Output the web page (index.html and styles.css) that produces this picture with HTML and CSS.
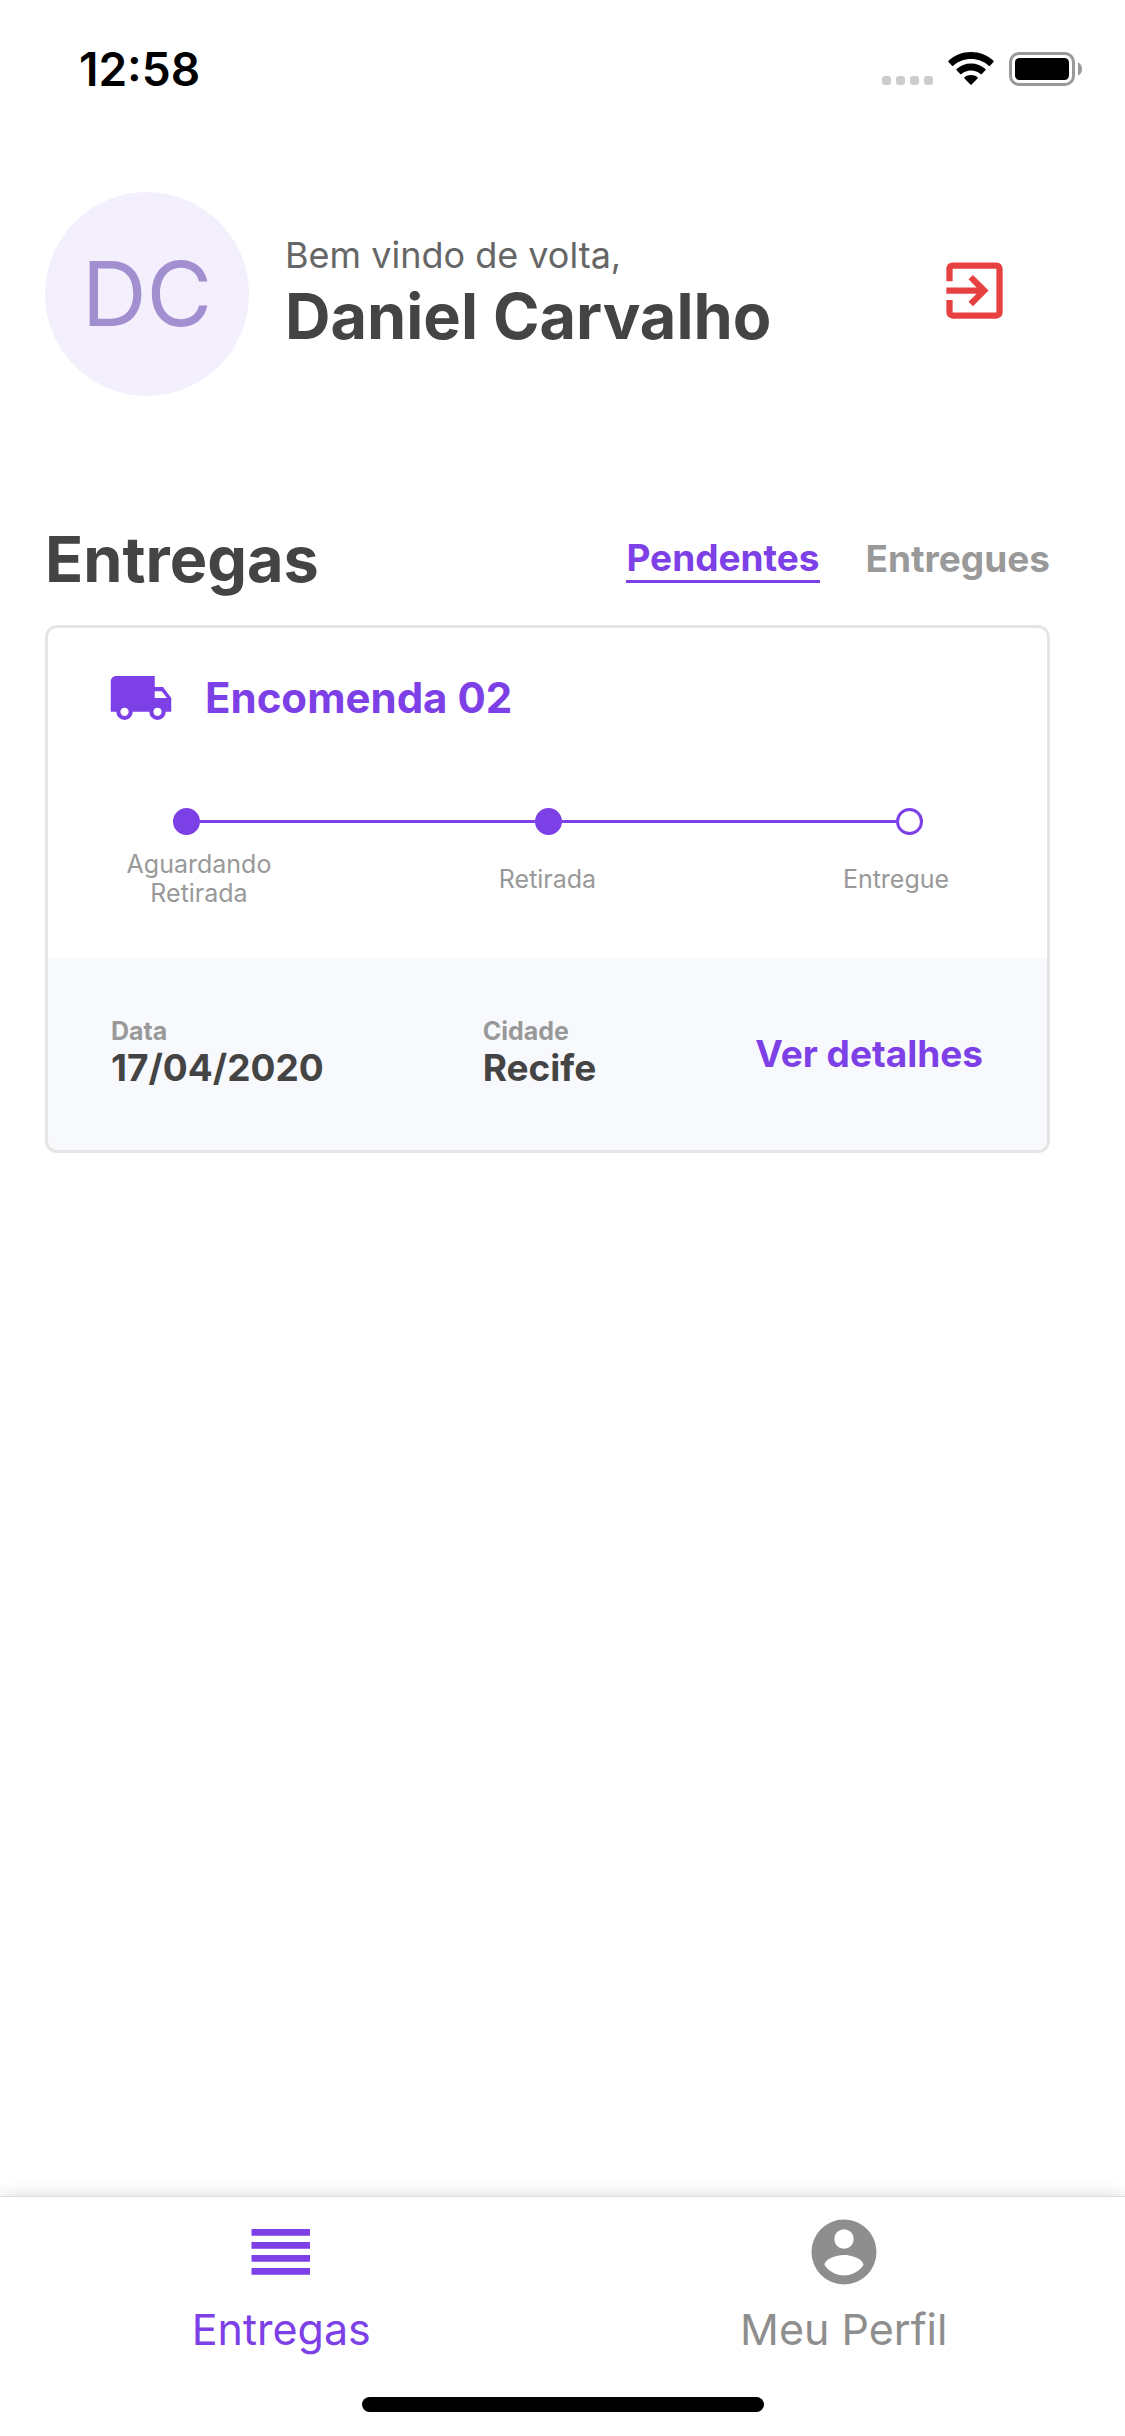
FILE: index.html
```html
<!DOCTYPE html>
<html lang="pt-BR">
<head>
<meta charset="utf-8">
<meta name="viewport" content="width=device-width, initial-scale=1">
<title>Entregas</title>
<link rel="stylesheet" href="styles.css">
</head>
<body>
<div class="status-bar">
  <time class="status-time">12:58</time>
  <div class="status-icons">
    <svg width="51" height="34" viewBox="0 0 51 34" fill="#cccccc" aria-hidden="true">
      <rect x="0" y="24" width="9" height="9" rx="3"/>
      <rect x="14" y="24" width="9" height="9" rx="3"/>
      <rect x="28" y="24" width="9" height="9" rx="3"/>
      <rect x="42" y="24" width="9" height="9" rx="3"/>
    </svg>
    <svg width="46" height="34" viewBox="0 0 46 34" aria-hidden="true">
      <path d="M23 0C14.400 0 6.600 3.300.500 8.800Q0 9.400.500 10L4 13.700Q4.600 14.200 5.200 13.700C10 9.400 16.200 7 23 7S36 9.400 40.800 13.700Q41.400 14.200 42 13.700L45.500 10Q46 9.400 45.500 8.800C39.400 3.300 31.600 0 23 0Z"/>
      <path d="M23 11.500C17.500 11.500 12.400 13.500 8.600 17Q8 17.600 8.600 18.200L12.200 21.900Q12.800 22.400 13.400 21.900C16 19.700 19.300 18.400 23 18.400S30 19.700 32.600 21.900Q33.200 22.400 33.800 21.900L37.400 18.200Q38 17.600 37.400 17C33.600 13.500 28.500 11.500 23 11.500Z"/>
      <path d="M23 23C20.500 23 18.200 23.800 16.500 25.300Q15.900 25.900 16.500 26.500L22.400 32.600Q23 33.200 23.600 32.600L29.500 26.500Q30.100 25.900 29.500 25.300C27.800 23.800 25.500 23 23 23Z"/>
    </svg>
    <svg width="73" height="34" viewBox="0 0 73 34" aria-hidden="true">
      <rect x="1.500" y="1.500" width="63" height="31" rx="8.500" fill="none" stroke="#999999" stroke-width="3"/>
      <rect x="6" y="6" width="54" height="22" rx="4.500"/>
      <path d="M69 10.500C71.500 11.500 73 14 73 17S71.500 22.500 69 23.500Z" fill="#999999"/>
    </svg>
  </div>
</div>

<header class="profile">
  <div class="avatar">DC</div>
  <div class="greeting">
    <p class="welcome">Bem vindo de volta,</p>
    <p class="heading">Daniel Carvalho</p>
  </div>
  <button class="logout" type="button" aria-label="Sair">
    <svg width="75" height="75" viewBox="0 0 24 24" fill="currentColor" aria-hidden="true">
      <path d="M19 3H5C3.890 3 3 3.890 3 5V9H5V5H19V19H5V15H3V19A2 2 0 0 0 5 21H19A2 2 0 0 0 21 19V5C21 3.890 20.100 3 19 3M10.080 15.580L11.500 17L16.500 12L11.500 7L10.080 8.410L12.670 11H3V13H12.670L10.080 15.580Z"/>
    </svg>
  </button>
</header>

<main class="deliveries">
  <div class="section-head">
    <h1 class="heading">Entregas</h1>
    <div class="filters">
      <button class="filter filter-active" type="button">Pendentes</button>
      <button class="filter" type="button">Entregues</button>
    </div>
  </div>

  <article class="card">
    <div class="card-title">
      <svg width="66" height="66" viewBox="0 0 24 24" fill="currentColor" aria-hidden="true">
        <path d="M18 18.500A1.500 1.500 0 0 1 16.500 17A1.500 1.500 0 0 1 18 15.500A1.500 1.500 0 0 1 19.500 17A1.500 1.500 0 0 1 18 18.500M19.500 9.500L21.460 12H17V9.500M6 18.500A1.500 1.500 0 0 1 4.500 17A1.500 1.500 0 0 1 6 15.500A1.500 1.500 0 0 1 7.500 17A1.500 1.500 0 0 1 6 18.500M20 8H17V4H3C1.890 4 1 4.890 1 6V17H3A3 3 0 0 0 6 20A3 3 0 0 0 9 17H15A3 3 0 0 0 18 20A3 3 0 0 0 21 17H23V12L20 8Z"/>
      </svg>
      <h2 class="card-name">Encomenda 02</h2>
    </div>
    <div class="track" aria-hidden="true">
      <span class="dot dot-done"></span>
      <span class="line"></span>
      <span class="dot dot-done"></span>
      <span class="line"></span>
      <span class="dot"></span>
    </div>
    <ol class="steps">
      <li class="step">Aguardando Retirada</li>
      <li class="step">Retirada</li>
      <li class="step">Entregue</li>
    </ol>
    <div class="card-footer">
      <dl class="fact">
        <dt class="fact-label">Data</dt>
        <dd class="fact-value">17/04/2020</dd>
      </dl>
      <dl class="fact">
        <dt class="fact-label">Cidade</dt>
        <dd class="fact-value">Recife</dd>
      </dl>
      <a class="details" href="#detalhes">Ver detalhes</a>
    </div>
  </article>
</main>

<nav class="tab-bar">
  <div class="tabs">
    <a class="tab tab-active" href="#entregas">
      <svg width="78" height="78" viewBox="0 0 78 78" fill="currentColor" aria-hidden="true">
        <path d="M9.500 16H68V22.700H9.500ZM9.500 29H68V35.700H9.500ZM9.500 42H68V48.700H9.500ZM9.500 55H68V61.700H9.500Z"/>
      </svg>
      Entregas
    </a>
    <a class="tab" href="#perfil">
      <svg width="78" height="78" viewBox="0 0 24 24" fill="currentColor" aria-hidden="true">
        <path d="M12 19.200C9.500 19.200 7.290 17.920 6 16C6.030 14 10 12.900 12 12.900C14 12.900 17.970 14 18 16C16.710 17.920 14.500 19.200 12 19.200M12 5A3 3 0 0 1 15 8A3 3 0 0 1 12 11A3 3 0 0 1 9 8A3 3 0 0 1 12 5M12 2A10 10 0 0 0 2 12A10 10 0 0 0 12 22A10 10 0 0 0 22 12C22 6.470 17.500 2 12 2Z"/>
      </svg>
      Meu Perfil
    </a>
  </div>
  <div class="home-indicator"></div>
</nav>
</body>
</html>
```

FILE: styles.css
```css
* {
  box-sizing: border-box;
  margin: 0;
  padding: 0;
}

body {
  display: flex;
  flex-direction: column;
  min-height: 100vh;
  overflow-x: hidden;
  background: #ffffff;
  color: #444444;
  font-family: Inter, "Liberation Sans", sans-serif;
  font-size: 37px;
  line-height: 44px;
}

svg {
  display: block;
  flex-shrink: 0;
}

button {
  border: 0;
  background: none;
  font: inherit;
  cursor: pointer;
}

a {
  color: inherit;
  text-decoration: none;
}

/* Status bar */
.status-bar {
  display: flex;
  align-items: center;
  justify-content: space-between;
  height: 138px;
  padding: 0 43px 0 79px;
  color: #000000;
}

.status-time {
  font-size: 46px;
  font-weight: 600;
}

.status-icons {
  display: flex;
  gap: 15px;
}

/* Profile header */
.profile {
  display: flex;
  align-items: center;
  padding: 54px 113px 0 45px;
}

.avatar {
  display: flex;
  flex-shrink: 0;
  align-items: center;
  justify-content: center;
  width: 204px;
  height: 204px;
  border-radius: 50%;
  background: #f4effc;
  color: #a28fd0;
  font-size: 90px;
}

.greeting {
  flex: 1;
  padding-left: 36px;
}

.welcome {
  color: #666666;
  font-size: 36px;
}

.heading {
  font-size: 63px;
  font-weight: 700;
  line-height: 78px;
}

.logout {
  padding-bottom: 8px;
  color: #e74040;
}

/* Deliveries */
.deliveries {
  flex: 1;
  padding: 124px 75px 60px 45px;
}

.section-head {
  display: flex;
  align-items: center;
  justify-content: space-between;
  margin-bottom: 27px;
}

.filters {
  display: flex;
  align-items: center;
  gap: 46px;
}

.filter {
  color: #999999;
  font-weight: 700;
}

.filter-active {
  border-bottom: 3px solid #7d40e7;
  color: #7d40e7;
}

.card {
  overflow: hidden;
  border: 3px solid #e5e5e5;
  border-radius: 12px;
}

.card-title {
  display: flex;
  align-items: center;
  gap: 31px;
  padding: 37px 60px 0;
  color: #7d40e7;
}

.card-name {
  font-size: 42px;
  font-weight: 700;
}

.track {
  display: flex;
  align-items: center;
  padding: 77px 124px 15px 125px;
}

.dot {
  width: 27px;
  height: 27px;
  border: 3px solid #7d40e7;
  border-radius: 50%;
}

.dot-done {
  background: #7d40e7;
}

.line {
  flex: 1;
  height: 3px;
  background: #7d40e7;
}

.steps {
  display: flex;
  align-items: center;
  justify-content: space-between;
  padding: 0 76px 50px;
  color: #999999;
  font-size: 25px;
  line-height: 29px;
  list-style: none;
}

.step {
  width: 150px;
  text-align: center;
}

.card-footer {
  display: flex;
  align-items: center;
  justify-content: space-between;
  padding: 59px 64px 60px 63px;
  background: #f8f9fd;
  font-weight: 700;
}

.fact-label {
  color: #999999;
  font-size: 25px;
  line-height: 29px;
}

.details {
  color: #7d40e7;
}

/* Bottom navigation */
.tab-bar {
  padding: 16px 0 24px;
  border-top: 1px solid #dddddd;
  background: #ffffff;
  box-shadow: 0 0 16px rgba(0, 0, 0, 0.15);
}

.tabs {
  display: grid;
  grid-template-columns: 1fr 1fr;
}

.tab {
  display: flex;
  flex-direction: column;
  align-items: center;
  gap: 11px;
  color: #8e8e8e;
  font-size: 43px;
  line-height: 54px;
}

.tab-active {
  color: #7d40e7;
}

.home-indicator {
  width: 402px;
  height: 15px;
  margin: 41px auto 0;
  border-radius: 8px;
  background: #000000;
}
```
